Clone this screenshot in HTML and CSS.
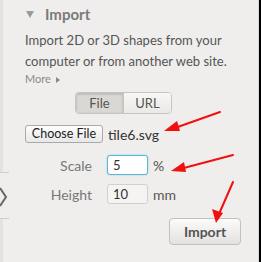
FILE: index.html
```html
<!DOCTYPE html>
<html>
  <head>
    <title>Import</title>
    <link rel="stylesheet" href="styles.css">
  </head>
  <body>
    <div class="frame">
      <div class="gutter">
        <div class="gutter-top"></div>
        <div class="tab">
          <svg width="8" height="20" viewBox="0 0 8 20">
            <polyline points="0,1 6,10 0,19" fill="none" stroke="#666" stroke-width="2" />
          </svg>
        </div>
        <div class="gutter-bottom"></div>
      </div>

      <div class="panel">
        <h2 class="panel-title"><span class="caret"></span>Import</h2>
        <p class="desc">
          Import 2D or 3D shapes from your computer or from another web site.
        </p>
        <a class="more">More <span class="more-arrow"></span></a>

        <div class="toggle">
          <button class="toggle-btn active">File</button>
          <button class="toggle-btn">URL</button>
        </div>

        <div class="file-row">
          <button class="choose-button">Choose File</button>
          <span class="file-name">tile6.svg</span>
        </div>

        <div class="field">
          <label class="field-label">Scale</label>
          <input type="text" class="field-input focused" value="5" />
          <span class="field-unit">%</span>
        </div>
        <div class="field">
          <label class="field-label">Height</label>
          <input type="text" class="field-input" value="10" />
          <span class="field-unit">mm</span>
        </div>

        <div class="actions">
          <button class="import-button">Import</button>
        </div>
      </div>

      <div class="edge"></div>

      <!-- red annotation arrows drawn over the panel -->
      <svg class="arrows" width="261" height="262" viewBox="0 0 261 262">
        <g stroke="#f01010" stroke-width="2" fill="#f01010" stroke-linecap="round">
          <line x1="220" y1="112" x2="172" y2="129" />
          <polygon points="164,131 177,121 180,131" stroke="none" />
          <line x1="233" y1="155" x2="180" y2="169" />
          <polygon points="171,171 184,162 186,172" stroke="none" />
          <line x1="233" y1="182" x2="219" y2="214" />
          <polygon points="216,223 212,209 223,213" stroke="none" />
        </g>
      </svg>
    </div>
  </body>
</html>
```

FILE: styles.css
```css
body {
  margin: 0;
  font-family: Lato, "Open Sans", sans-serif;
  background-color: #efeeec;
}
.frame {
  position: relative;
  display: flex;
  width: 261px;
  height: 262px;
  overflow: hidden;
}
.gutter {
  width: 9px;
  display: flex;
  flex-direction: column;
}
.gutter-top {
  height: 173px;
  width: 3px;
  background-color: #e3e2e0;
}
.tab {
  height: 45px;
  border-top: 1px solid #cfcecc;
  border-bottom: 1px solid #cfcecc;
  display: flex;
  align-items: center;
  margin-top: -1px;
}
.tab svg {
  margin-top: 2px;
}
.gutter-bottom {
  flex: 1;
  width: 3px;
  background-color: #e3e2e0;
}
.panel {
  flex: 1;
  padding-left: 16px;
  color: #555;
}
.panel-title {
  margin: 6px 0 0;
  height: 16px;
  font-size: 15px;
  font-weight: bold;
  color: #7a7a7a;
  display: flex;
  align-items: center;
}
.caret {
  width: 0;
  height: 0;
  border-left: 4px solid transparent;
  border-right: 4px solid transparent;
  border-top: 7px solid #9a9a9a;
  margin: 1px 11px 0 1px;
}
.desc {
  margin: 8px 0 0;
  font-size: 13px;
  line-height: 21px;
  width: 225px;
}
.more {
  display: block;
  font-size: 11px;
  color: #8a8a8a;
  margin-top: -1px;
  line-height: 15px;
}
.more-arrow {
  display: inline-block;
  border-top: 3px solid transparent;
  border-bottom: 3px solid transparent;
  border-left: 4px solid #8a8a8a;
  margin-left: 2px;
}
.toggle {
  display: flex;
  margin: 6px 0 0 50px;
  width: 97px;
  height: 22px;
  border: 1px solid #c6c5c2;
  border-radius: 4px;
  overflow: hidden;
  box-sizing: border-box;
}
.toggle-btn {
  flex: 1;
  border: none;
  margin: 0;
  padding: 0;
  font-family: inherit;
  font-size: 13px;
  color: #555;
  background: linear-gradient(#f7f7f6, #eae9e7);
}
.toggle-btn.active {
  background-color: #d9d8d4;
  background-image: none;
  box-shadow: inset 0 1px 3px rgba(0, 0, 0, 0.2);
  border-right: 1px solid #c6c5c2;
}
.file-row {
  display: flex;
  align-items: center;
  margin-top: 11px;
  font-size: 14px;
}
.choose-button {
  width: 78px;
  height: 18px;
  padding: 0;
  border: 1px solid #a9a9a9;
  border-radius: 3px;
  background: linear-gradient(#fdfdfd, #e8e8e8);
  font-family: inherit;
  font-size: 12.5px;
  line-height: 16px;
  color: #222;
}
.file-name {
  margin-left: 5px;
  color: #333;
}
.field {
  display: flex;
  align-items: center;
  font-size: 14px;
  height: 20px;
}
.file-row + .field {
  margin-top: 12px;
}
.field + .field {
  margin-top: 9px;
}
.field-label {
  width: 67px;
  text-align: right;
  color: #777;
}
.field-input {
  margin-left: 15px;
  width: 41px;
  height: 20px;
  box-sizing: border-box;
  border: 1px solid #d3d0cc;
  border-radius: 3px;
  padding: 0 5px;
  font-family: inherit;
  font-size: 13px;
  color: #333;
  background-color: #f5f4f2;
}
.field-input.focused {
  border-color: #5fb5d6;
  background-color: #fff;
  box-shadow: 0 0 2px #8fd0e8;
}
.field-unit {
  margin-left: 5px;
  color: #555;
}
.actions {
  display: flex;
  margin-top: 14px;
  padding-left: 144px;
}
.import-button {
  width: 72px;
  height: 27px;
  border: 1px solid #c2c1be;
  border-radius: 4px;
  background: linear-gradient(#fbfbfa, #e3e2df);
  font-family: inherit;
  font-weight: bold;
  font-size: 14px;
  color: #555;
}
.edge {
  width: 2px;
  background-color: #000;
  border-left: 1px solid #d8d7d5;
}
.arrows {
  position: absolute;
  left: 0;
  top: 0;
  pointer-events: none;
}
```
